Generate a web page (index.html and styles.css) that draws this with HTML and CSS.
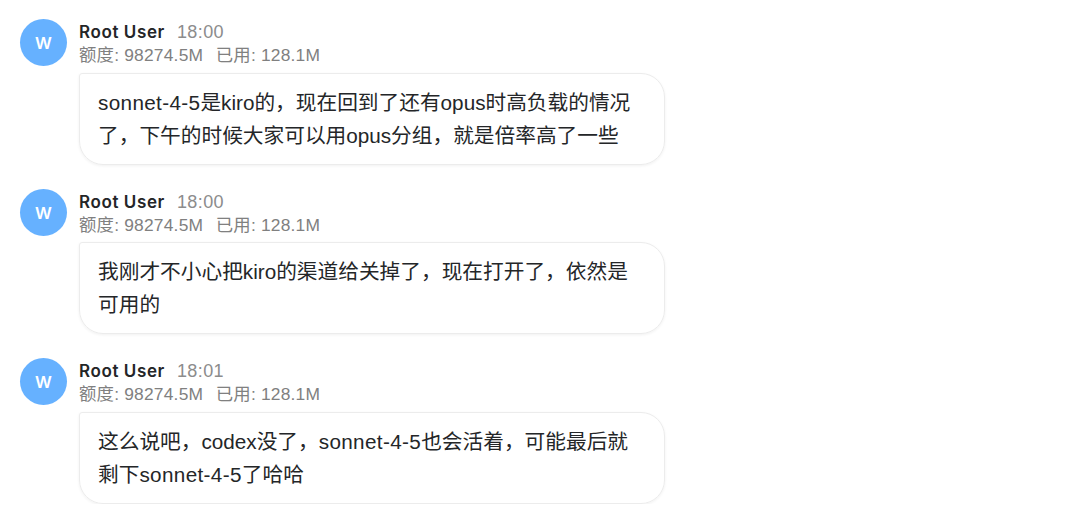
FILE: index.html
```html
<!DOCTYPE html>
<html lang="zh-CN">
  <head>
    <meta charset="UTF-8" />
    <meta name="viewport" content="width=device-width, initial-scale=1.0" />
    <title>Chat</title>
    <link rel="stylesheet" href="styles.css">
  </head>
  <body>
    <div class="messages">
      <div class="message">
        <div class="avatar">W</div>
        <div class="content">
          <div class="meta"><span class="name">Root User</span><span class="time">18:00</span></div>
          <div class="quota"><span>额度: 98274.5M</span><span>已用: 128.1M</span></div>
          <div class="bubble">
            <p><span class="model">sonnet-4-5</span>是kiro的，现在回到了还有opus时高负载的情况</p>
            <p>了，下午的时候大家可以用opus分组，就是倍率高了一些</p>
          </div>
        </div>
      </div>

      <div class="message">
        <div class="avatar">W</div>
        <div class="content">
          <div class="meta"><span class="name">Root User</span><span class="time">18:00</span></div>
          <div class="quota"><span>额度: 98274.5M</span><span>已用: 128.1M</span></div>
          <div class="bubble">
            <p>我刚才不小心把kiro的渠道给关掉了，现在打开了，依然是</p>
            <p>可用的</p>
          </div>
        </div>
      </div>

      <div class="message">
        <div class="avatar">W</div>
        <div class="content">
          <div class="meta"><span class="name">Root User</span><span class="time">18:01</span></div>
          <div class="quota"><span>额度: 98274.5M</span><span>已用: 128.1M</span></div>
          <div class="bubble">
            <p>这么说吧，codex没了，<span class="model">sonnet-4-5</span>也会活着，可能最后就</p>
            <p>剩下<span class="model">sonnet-4-5</span>了哈哈</p>
          </div>
        </div>
      </div>
    </div>
  </body>
</html>
```

FILE: styles.css
```css
* {
  box-sizing: border-box;
}

body {
  margin: 0;
  background: #fff;
  font-family: "Liberation Sans", "Noto Sans CJK SC", sans-serif;
  color: #242628;
  overflow: hidden;
}

.messages {
  display: flex;
  flex-direction: column;
  gap: 24px;
  padding: 19px 20px 0;
}

.message {
  display: flex;
  gap: 12px;
}

.avatar {
  display: flex;
  align-items: center;
  justify-content: center;
  width: 47px;
  height: 47px;
  padding-top: 1px;
  border-radius: 50%;
  background: #66b1ff;
  color: #fff;
  font-family: Inter, sans-serif;
  font-size: 16.5px;
  font-weight: 600;
}

.content {
  width: 586px;
}

.meta {
  display: flex;
  gap: 12px;
  height: 25px;
  line-height: 26px;
  font-size: 18px;
}

.name {
  font-family: Inter, sans-serif;
  font-weight: 600;
  font-size: 17px;
  letter-spacing: 0.6px;
}

.time {
  color: #8c8c8c;
  letter-spacing: 0.4px;
}

.quota {
  display: flex;
  gap: 12.5px;
  height: 28.5px;
  line-height: 23px;
  font-size: 17.4px;
  letter-spacing: 0.2px;
  color: #808080;
}

.bubble {
  height: 92px;
  padding: 12.4px 18px;
  border: 1px solid #ececec;
  border-radius: 3px 24px 24px 24px;
  box-shadow: 0 1px 3px rgba(0, 0, 0, 0.06);
}

.bubble p {
  margin: 0;
  font-size: 20.7px;
  line-height: 33px;
  white-space: nowrap;
}

.model {
  letter-spacing: 0.35px;
}
```
